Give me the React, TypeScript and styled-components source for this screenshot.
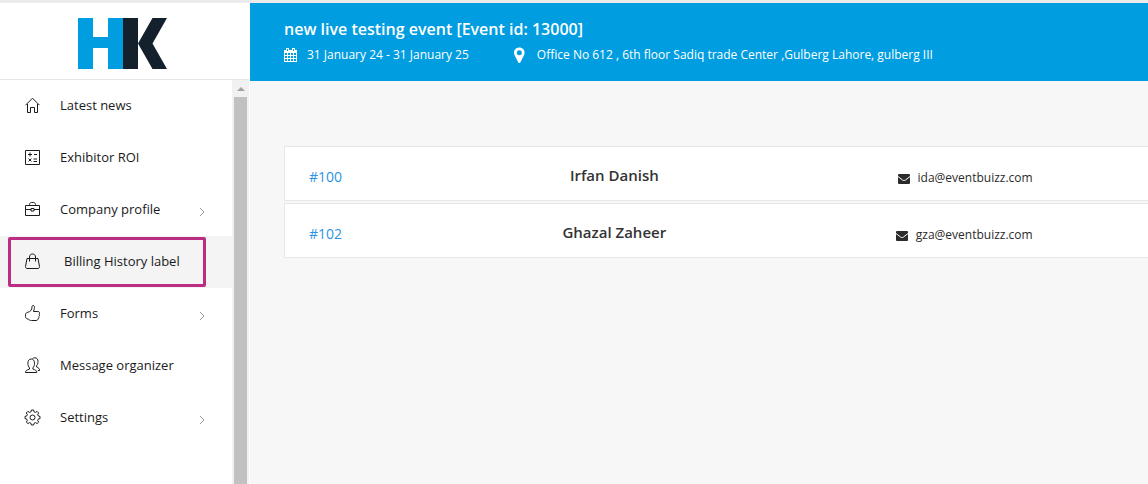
import React from "react";
import styled, { createGlobalStyle } from "styled-components";

const GlobalStyle = createGlobalStyle`
  *, *::before, *::after { box-sizing: border-box; }
  body {
    margin: 0;
    background: #f7f7f7;
    color: #1a1a1a;
    font-family: "Open Sans", "Noto Sans", sans-serif;
    font-size: 13px;
  }
`;

const Page = styled.div`
  display: flex;
  min-height: 100vh;
  border-top: 3px solid #ebebeb;
`;

const Sidebar = styled.aside`
  display: flex;
  flex-direction: column;
  flex: none;
  width: 250px;
  padding-right: 1px;
  background: #fff;
`;

const Brand = styled.a`
  display: flex;
  justify-content: center;
  padding: 15px 4px 10px 0;
  border-bottom: 1px solid #e5e5e5;
`;

const SidebarBody = styled.div`
  display: flex;
  flex: 1;
`;

const Nav = styled.nav`
  flex: 1;
`;

const Item = styled.a<{ $active?: boolean }>`
  position: relative;
  display: flex;
  align-items: center;
  height: 52px;
  padding: 0 27px 2px 24px;
  background: ${(p) => (p.$active ? "#f4f4f4" : "transparent")};
  color: inherit;
  font-size: 13px;
  line-height: 20px;
  text-decoration: none;
`;

const ItemIcon = styled.svg`
  flex: none;
  width: 17px;
  height: 16px;
  margin-right: 19px;
  fill: none;
  stroke: #1c1c1c;
  stroke-width: 1;
`;

const ItemLabel = styled.span<{ $indent?: boolean }>`
  flex: 1;
  padding-left: ${(p) => (p.$indent ? "4px" : "0")};
`;

const Chevron = styled.svg`
  width: 6px;
  height: 10px;
  margin-top: 6px;
  fill: none;
  stroke: #999;
`;

const Highlight = styled.span`
  position: absolute;
  top: 1px;
  bottom: 1px;
  left: 8px;
  right: 26px;
  border: 3px solid #ba2d82;
  border-radius: 2px;
`;

const ScrollTrack = styled.div`
  display: flex;
  flex-direction: column;
  align-items: center;
  width: 17px;
  background: #f1f1f1;
`;

const ScrollArrow = styled.div`
  margin: 7px 0 6px;
  border: 4px solid transparent;
  border-top: 0;
  border-bottom-color: #a3a3a3;
`;

const ScrollThumb = styled.div`
  flex: 1;
  width: 13px;
  background: #c1c1c1;
`;

const Main = styled.main`
  flex: 1;
  min-width: 0;
`;

const Banner = styled.header`
  padding: 14px 34px 16px;
  background: #009de0;
  color: #fff;
`;

const Title = styled.h1`
  margin: 0;
  font-size: 16px;
  font-weight: 600;
  line-height: 24px;
`;

const Details = styled.div`
  display: flex;
  gap: 45px;
  padding-top: 4px;
`;

const Detail = styled.div`
  display: flex;
  align-items: center;
  gap: 9px;
  font-size: 12px;
  line-height: 20px;
`;

const DetailIcon = styled.svg`
  width: 14px;
  height: 16px;
  fill: #fff;
`;

const Contacts = styled.table`
  width: 100%;
  table-layout: fixed;
  border-collapse: separate;
  border-spacing: 0 2px;
`;

const Content = styled.section`
  padding: 63px 0 0 34px;
`;

const Cell = styled.td`
  height: 55px;
  padding: 0;
  border: solid #e7e7e7;
  border-width: 1px 0;
  background: #fff;
  vertical-align: top;
`;

const IdCell = styled(Cell)`
  width: 20%;
  padding: 20px 0 0 24px;
  border-left-width: 1px;
`;

const NameCell = styled(Cell)`
  width: 36%;
  padding: 16px 0 0 4px;
  color: #333;
  font-size: 15px;
  font-weight: 600;
  line-height: 24px;
  text-align: center;
`;

const EmailCell = styled(Cell)`
  width: 31%;
  padding-top: 21px;
  padding-right: 3px;
`;

const IdLink = styled.a`
  color: #2d94e6;
  font-size: 14px;
  line-height: 20px;
  text-decoration: none;
`;

const Email = styled.div`
  display: flex;
  align-items: center;
  justify-content: flex-end;
  gap: 8px;
  color: #2b2b2b;
  font-size: 12px;
  line-height: 20px;
`;

const MailIcon = styled.svg`
  width: 12px;
  height: 10px;
  margin-top: 2px;
`;

const icons = {
  home: (
    <>
      <path d="M1.500 8.200 8.500 1.200l7 7" />
      <path d="M3.500 7v8.500h3v-5h4v5h3V7" />
    </>
  ),
  calculator: (
    <>
      <path d="M1.500 1.500h14v14h-14z" />
      <path d="M4 5.500h4M6 3.500v4M10 5.500h3M4.500 9.500l3 3M7.500 9.500l-3 3M9.500 10h3.500M9.500 12.500h3.500" />
    </>
  ),
  briefcase: (
    <>
      <path d="M1.500 4.500h14v10h-14zM5.500 4.500v-1c0-1 .6-2 2-2h2c1.400 0 2 1 2 2v1" />
      <path d="M1.500 8.500h5.500M10 8.500h5.500M7 7.500h3v2.500H7z" />
    </>
  ),
  bag: (
    <>
      <path d="M3 5.500h11l1.500 8c0 1.300-.5 2-1.500 2H3c-1 0-1.500-.7-1.500-2z" />
      <path d="M5.500 8.500V4c0-2 1.300-3 3-3s3 1 3 3v4.500" />
    </>
  ),
  thumb: (
    <path d="M1.500 11.500c-.2-2.800.5-4 2.200-4.200 2.800-.4 4.300-2.600 4.300-5.300 0-1 .4-1.500 1.100-1.500 1.300 0 1.700 1.500 1.200 3.200l-.8 2.800h4.300c1.900 0 2.200 2 1.200 2.600.9.800.7 2-.2 2.500.4 1 0 1.900-.8 2.100 0 1.200-.7 1.800-2 1.800H7.500c-1.500 0-2.500-.5-3.200-1.500-1.500.2-2.700-.7-2.800-2.500z" />
  ),
  people: (
    <>
      <path d="M1.500 15.500c0-2 1.500-2.600 4-3.400v-1.300C4.300 9.800 3.900 8 3.900 6.200 3.900 3.700 5.100 2 7.200 2s3.300 1.700 3.300 4.200c0 1.800-.5 3.600-1.600 4.600v1.300c2.400.8 3.900 1.400 3.900 3.400z" />
      <path d="M8.500 1.700C9.200 1 10 .8 10.900.8c2 0 3.100 1.400 3.100 3.600 0 1.600-.3 3.200-1.400 4.200V10c1.800.7 3 1.500 3 3.500h-1.800" />
    </>
  ),
  gear: (
    <>
      <path d="M7.400 1h2.200l.4 1.800 1.500.6 1.600-1 1.600 1.600-1 1.600.6 1.400 1.700.4v2.200l-1.700.4-.6 1.500 1 1.600-1.600 1.500-1.600-1-1.500.7-.4 1.700H7.400L7 14.300l-1.500-.7-1.600 1-1.600-1.500 1-1.600-.6-1.500L1 9.600V7.400L2.700 7l.6-1.400-1-1.600 1.600-1.600 1.600 1L7 2.800z" />
      <circle cx="8.500" cy="8.500" r="2.500" />
    </>
  ),
};

type NavEntry = {
  label: string;
  icon: keyof typeof icons;
  expandable?: boolean;
  active?: boolean;
};

const navEntries: NavEntry[] = [
  { label: "Latest news", icon: "home" },
  { label: "Exhibitor ROI", icon: "calculator" },
  { label: "Company profile", icon: "briefcase", expandable: true },
  { label: "Billing History label", icon: "bag", active: true },
  { label: "Forms", icon: "thumb", expandable: true },
  { label: "Message organizer", icon: "people" },
  { label: "Settings", icon: "gear", expandable: true },
];

const contacts = [
  { id: "#100", name: "Irfan Danish", email: "ida@eventbuizz.com" },
  { id: "#102", name: "Ghazal Zaheer", email: "gza@eventbuizz.com" },
];

export default function App() {
  return (
    <>
      <GlobalStyle />
      <Page>
        <Sidebar>
          <Brand href="#" aria-label="Home">
            <svg width="89" height="51" viewBox="0 0 89 51" aria-hidden="true">
              <path fill="#009de0" d="M0 0h15v19h15V0h15v51H30V30H15v21H0z" />
              <path fill="#14212d" d="M45 0h15v51H45zM60 25.500 74.500 0H89L74.500 25.500 89 51H74.500z" />
            </svg>
          </Brand>
          <SidebarBody>
            <Nav>
              {navEntries.map((entry) => (
                <Item key={entry.label} href="#" $active={entry.active}>
                  <ItemIcon viewBox="0 0 17 16" overflow="visible" aria-hidden="true">
                    {icons[entry.icon]}
                  </ItemIcon>
                  <ItemLabel $indent={entry.active}>{entry.label}</ItemLabel>
                  {entry.expandable && (
                    <Chevron viewBox="0 0 6 10" aria-hidden="true">
                      <path d="M1 1l4 4-4 4" />
                    </Chevron>
                  )}
                  {entry.active && <Highlight />}
                </Item>
              ))}
            </Nav>
            <ScrollTrack aria-hidden="true">
              <ScrollArrow />
              <ScrollThumb />
            </ScrollTrack>
          </SidebarBody>
        </Sidebar>
        <Main>
          <Banner>
            <Title>new live testing event [Event id: 13000]</Title>
            <Details>
              <Detail>
                <DetailIcon viewBox="0 0 14 16" aria-hidden="true">
                  <path
                    fillRule="evenodd"
                    d="M0 3h2V1h3v2h3V1h3v2h2v12H0zM1 6v2h2V6zm3 0v2h2V6zm3 0v2h2V6zm3 0v2h2V6zM1 9v2h2V9zm3 0v2h2V9zm3 0v2h2V9zm3 0v2h2V9zM1 12v2h2v-2zm3 0v2h2v-2zm3 0v2h2v-2zm3 0v2h2v-2zM3 2v2h1V2zm6 0v2h1V2z"
                  />
                </DetailIcon>
                <span>31 January 24 - 31 January 25</span>
              </Detail>
              <Detail>
                <DetailIcon viewBox="1.700 0 14 16" aria-hidden="true">
                  <path
                    fillRule="evenodd"
                    d="M7 .5c-3 0-5.300 2.200-5.300 5.100 0 1 .2 1.600.5 2.300L6 15.400c.4.800 1.600.8 2 0l3.800-7.500c.3-.7.5-1.300.5-2.300C12.300 2.700 10 .5 7 .5zM7 3.200a2.500 2.500 0 1 1 0 5 2.500 2.500 0 0 1 0-5z"
                  />
                </DetailIcon>
                <span>Office No 612 , 6th floor Sadiq trade Center ,Gulberg Lahore, gulberg III</span>
              </Detail>
            </Details>
          </Banner>
          <Content>
            <Contacts>
              <tbody>
                {contacts.map((contact) => (
                  <tr key={contact.id}>
                    <IdCell>
                      <IdLink href="#">{contact.id}</IdLink>
                    </IdCell>
                    <NameCell>{contact.name}</NameCell>
                    <EmailCell>
                      <Email>
                        <MailIcon viewBox="0 0 12 10" aria-hidden="true">
                          <rect width="12" height="10" rx="1" fill="#2b2b2b" />
                          <path d="M0 2.500 4.500 6c1 .7 2 .7 3 0L12 2.500" fill="none" stroke="#fff" />
                        </MailIcon>
                        <span>{contact.email}</span>
                      </Email>
                    </EmailCell>
                    <Cell />
                  </tr>
                ))}
              </tbody>
            </Contacts>
          </Content>
        </Main>
      </Page>
    </>
  );
}
